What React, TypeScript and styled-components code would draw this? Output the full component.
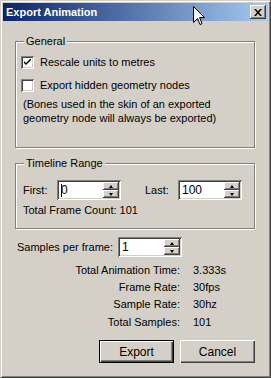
import React from "react";
import styled, { createGlobalStyle } from "styled-components";

const Global = createGlobalStyle`
  html, body { margin: 0; padding: 0; background: #D4D0C8; }
  body { font-family: "Liberation Sans", Arial, sans-serif; font-size: 11px; color: #000; }
  * { box-sizing: border-box; }
`;

const Window = styled.div`
  position: relative;
  width: 271px;
  height: 378px;
  background: #D4D0C8;
  border: 1px solid;
  border-color: #D4D0C8 #404040 #404040 #D4D0C8;
  box-shadow: inset 1px 1px 0 #fff, inset -1px -1px 0 #808080;
  padding: 2px;
  display: flex;
  flex-direction: column;
`;

const TitleBar = styled.div`
  height: 18px;
  background: linear-gradient(to right, #0A246A, #A6CAF0);
  display: flex;
  align-items: center;
  padding: 0 2px 0 3px;
`;

const TitleText = styled.span`
  flex: 1;
  color: #fff;
  font-weight: bold;
  font-size: 11px;
  line-height: 13px;
`;

const CloseButton = styled.div`
  width: 16px;
  height: 14px;
  background: #D4D0C8;
  box-shadow: inset -1px -1px 0 #404040, inset 1px 1px 0 #fff, inset -2px -2px 0 #808080;
  display: flex;
  align-items: center;
  justify-content: center;
`;

const Content = styled.div`
  flex: 1;
  display: flex;
  flex-direction: column;
  padding: 20px 13px 0 12px;
`;

const Group = styled.div<{ $top: number; $pt: number; $pb: number }>`
  position: relative;
  margin-top: ${(p) => p.$top}px;
  border: 1px solid #808080;
  box-shadow: inset 1px 1px 0 #fff, 1px 1px 0 #fff;
  padding: ${(p) => p.$pt}px 6px ${(p) => p.$pb}px 7px;
  display: flex;
  flex-direction: column;
`;

const Legend = styled.span`
  position: absolute;
  top: -7px;
  left: 8px;
  padding: 0 2px;
  background: #D4D0C8;
  line-height: 13px;
`;

const CheckRow = styled.label<{ $mt?: number }>`
  display: flex;
  align-items: center;
  gap: 6px;
  margin-left: -2px;
  margin-top: ${(p) => p.$mt ?? 0}px;
  height: 13px;
  line-height: 13px;
`;

const Box = styled.span`
  width: 13px;
  height: 13px;
  background: #fff;
  box-shadow: inset 1px 1px 0 #808080, inset -1px -1px 0 #fff, inset 2px 2px 0 #404040, inset -2px -2px 0 #D4D0C8;
  display: flex;
  align-items: center;
  justify-content: center;
`;

const Note = styled.p`
  margin: 5px 0 0 0;
  line-height: 14px;
`;

const FieldRow = styled.div`
  display: flex;
  align-items: center;
  height: 20px;
`;

const FieldLabel = styled.span<{ $w: number }>`
  width: ${(p) => p.$w}px;
  line-height: 13px;
`;

const Spin = styled.div`
  width: 64px;
  height: 20px;
  background: #fff;
  box-shadow: inset 1px 1px 0 #808080, inset -1px -1px 0 #fff, inset 2px 2px 0 #404040, inset -2px -2px 0 #D4D0C8;
  padding: 2px;
  display: flex;
`;

const SpinText = styled.div`
  flex: 1;
  padding-left: 2px;
  line-height: 16px;
  font-size: 12px;
  display: flex;
  align-items: center;
`;

const Caret = styled.span`
  width: 1px;
  height: 13px;
  background: #000;
  margin-right: -1px;
`;

const SpinButtons = styled.div`
  width: 16px;
  display: flex;
  flex-direction: column;
`;

const SpinBtn = styled.div`
  flex: 1;
  background: #D4D0C8;
  box-shadow: inset -1px -1px 0 #404040, inset 1px 1px 0 #fff, inset -2px -2px 0 #808080;
  display: flex;
  align-items: center;
  justify-content: center;
`;

const Arrow = styled.span<{ $up?: boolean }>`
  width: 0;
  height: 0;
  border-left: 2.5px solid transparent;
  border-right: 2.5px solid transparent;
  ${(p) => (p.$up ? "border-bottom: 3px solid #000;" : "border-top: 3px solid #000;")}
`;

const Line = styled.div<{ $mt: number }>`
  margin-top: ${(p) => p.$mt}px;
  line-height: 13px;
`;

const SamplesRow = styled.div`
  display: flex;
  align-items: center;
  margin-top: 8px;
  padding-left: 2px;
`;

const Stats = styled.div`
  display: grid;
  grid-template-columns: 165px auto;
  column-gap: 13px;
  grid-auto-rows: 17.3px;
  align-items: center;
  margin-top: 4px;
`;

const StatLabel = styled.span`
  text-align: right;
`;

const Buttons = styled.div`
  display: flex;
  justify-content: flex-end;
  gap: 6px;
  margin-top: 10px;
`;

const Button = styled.div<{ $default?: boolean }>`
  width: 75px;
  height: 23px;
  display: flex;
  align-items: center;
  justify-content: center;
  font-size: 12px;
  background: #D4D0C8;
  ${(p) =>
    p.$default
      ? "border: 1px solid #000; box-shadow: inset 1px 1px 0 #fff, inset -1px -1px 0 #404040, inset -2px -2px 0 #808080;"
      : "box-shadow: inset 1px 1px 0 #fff, inset -1px -1px 0 #404040, inset -2px -2px 0 #808080;"}
`;

const Cursor = styled.svg`
  position: absolute;
  left: 192px;
  top: 5px;
`;

function Check() {
  return (
    <svg width="7" height="7" viewBox="0 0 7 7">
      <path d="M0 2 L0 4 L2 6 L7 1 L7 -1 L2 4 Z" fill="#000" />
    </svg>
  );
}

function SpinBox({ value, caret }: { value: string; caret?: boolean }) {
  return (
    <Spin>
      <SpinText>
        {caret && <Caret />}
        {value}
      </SpinText>
      <SpinButtons>
        <SpinBtn>
          <Arrow $up />
        </SpinBtn>
        <SpinBtn>
          <Arrow />
        </SpinBtn>
      </SpinButtons>
    </Spin>
  );
}

export default function App() {
  return (
    <>
      <Global />
      <Window>
        <TitleBar>
          <TitleText>Export Animation</TitleText>
          <CloseButton>
            <svg width="8" height="7" viewBox="0 0 8 7">
              <path d="M0 0h2l2 2.5L6 0h2L5 3.5 8 7H6L4 4.5 2 7H0l3-3.5z" fill="#000" />
            </svg>
          </CloseButton>
        </TitleBar>
        <Content>
          <Group $top={0} $pt={14} $pb={22}>
            <Legend>General</Legend>
            <CheckRow>
              <Box>
                <Check />
              </Box>
              Rescale units to metres
            </CheckRow>
            <CheckRow $mt={10}>
              <Box />
              Export hidden geometry nodes
            </CheckRow>
            <Note>
              (Bones used in the skin of an exported
              <br />
              geometry node will always be exported)
            </Note>
          </Group>
          <Group $top={15} $pt={16} $pb={11}>
            <Legend>Timeline Range</Legend>
            <FieldRow>
              <FieldLabel $w={34}>First:</FieldLabel>
              <SpinBox value="0" caret />
              <FieldLabel $w={57} style={{ paddingLeft: 24 }}>
                Last:
              </FieldLabel>
              <SpinBox value="100" />
            </FieldRow>
            <Line $mt={4}>Total Frame Count: 101</Line>
          </Group>
          <SamplesRow>
            <FieldLabel $w={101}>Samples per frame:</FieldLabel>
            <SpinBox value="1" />
          </SamplesRow>
          <Stats>
            <StatLabel>Total Animation Time:</StatLabel>
            <span>3.333s</span>
            <StatLabel>Frame Rate:</StatLabel>
            <span>30fps</span>
            <StatLabel>Sample Rate:</StatLabel>
            <span>30hz</span>
            <StatLabel>Total Samples:</StatLabel>
            <span>101</span>
          </Stats>
          <Buttons>
            <Button $default>Export</Button>
            <Button>Cancel</Button>
          </Buttons>
        </Content>
        <Cursor width="12" height="20" viewBox="0 0 12 20">
          <path d="M0.5 0.5 L0.5 16.5 L4.5 12.5 L7 18.5 L9 17.7 L6.6 11.6 L11.5 11.6 Z" fill="#fff" stroke="#000" strokeWidth="1" />
        </Cursor>
      </Window>
    </>
  );
}
